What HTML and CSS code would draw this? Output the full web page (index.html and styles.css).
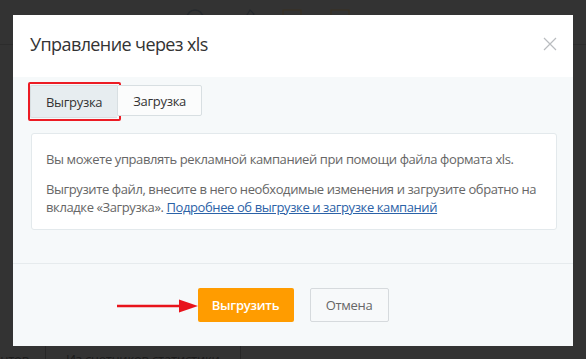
FILE: index.html
```html
<!DOCTYPE html>
<html lang="ru">
<head>
<meta charset="UTF-8">
<meta name="viewport" content="width=device-width, initial-scale=1.0">
<title>Управление через xls</title>
<link rel="stylesheet" href="styles.css">
</head>
<body>
  <div class="page">
    <div class="toolbar">
      <svg class="tool-icons" width="586" height="44" viewBox="0 0 586 44">
        <circle cx="195" cy="18" r="8" fill="none" stroke="#262a2e" stroke-width="1.5"/>
        <path d="M244 20 L250 10 L254 14 L248 22 Z" fill="none" stroke="#262a2e" stroke-width="1.2"/>
        <rect x="283" y="10" width="18" height="16" fill="none" stroke="#3a3020" stroke-width="1"/>
        <rect x="331" y="10" width="18" height="16" fill="none" stroke="#3a3020" stroke-width="1"/>
      </svg>
    </div>
    <div class="workspace"></div>
    <div class="source-tabs">
      <div class="source-tab first">Клиентов</div>
      <div class="source-tab">Из счетчиков статистики</div>
    </div>
  </div>

  <div class="modal">
    <div class="modal-header">
      <h2 class="modal-title">Управление через xls</h2>
      <svg class="close" width="14" height="14" viewBox="0 0 14 14">
        <path d="M1 1 L13 13 M13 1 L1 13" stroke="#b9bcbf" stroke-width="1.2"/>
      </svg>
    </div>
    <div class="modal-body">
      <div class="tabs">
        <button class="tab active" type="button">Выгрузка<span class="mark"></span></button>
        <button class="tab" type="button">Загрузка</button>
      </div>
      <div class="panel">
        <p>Вы можете управлять рекламной кампанией при помощи файла формата xls.</p>
        <p>Выгрузите файл, внесите в него необходимые изменения и загрузите обратно на вкладке «Загрузка». <a href="#">Подробнее об выгрузке и загрузке кампаний</a></p>
      </div>
    </div>
    <div class="modal-footer">
      <svg class="arrow" width="82" height="16" viewBox="0 0 82 16">
        <path d="M0 8 L66 8" stroke="#e8141b" stroke-width="2.5"/>
        <path d="M62 1.5 L81 8 L62 14.5 Z" fill="#e8141b"/>
      </svg>
      <button class="btn btn-primary" type="button">Выгрузить</button>
      <button class="btn btn-cancel" type="button">Отмена</button>
    </div>
  </div>
</body>
</html>
```

FILE: styles.css
```css
body {
  margin: 0;
  background-color: #333;
  font-family: "Open Sans", "Noto Sans", sans-serif;
  overflow: hidden;
}
.page {
  width: 586px;
  height: 359px;
  display: flex;
  flex-direction: column;
}
.toolbar {
  height: 44px;
  border-bottom: 1px solid #2c2c2c;
}
.tool-icons {
  display: block;
}
.workspace {
  flex: 1;
}
.source-tabs {
  display: flex;
  height: 14px;
  overflow: hidden;
}
.source-tab {
  font-size: 13px;
  line-height: 28px;
  color: #1c1c1c;
  padding: 0 20px;
  letter-spacing: -0.2px;
  border-right: 1px solid #272727;
}
.source-tab.first {
  width: 45px;
  padding: 0;
  text-indent: -30px;
  overflow: hidden;
  white-space: nowrap;
}

.modal {
  position: absolute;
  top: 15px;
  left: 13px;
  width: 560px;
  height: 331px;
  background-color: #f6f9fa;
  display: flex;
  flex-direction: column;
}
.modal-header {
  height: 62px;
  background-color: white;
  display: flex;
  align-items: center;
  justify-content: space-between;
  padding: 0 17px 0 17px;
}
.modal-title {
  margin: 0;
  font-size: 18px;
  font-weight: normal;
  color: #333;
  letter-spacing: -0.6px;
  padding-bottom: 4px;
}
.close {
  margin-right: -1px;
  margin-bottom: 4px;
}
.modal-body {
  padding: 8px 16px 33px 17px;
  border-bottom: 1px solid #e6ebed;
}
.tabs {
  display: flex;
}
.tab {
  position: relative;
  height: 31px;
  padding: 0 15px;
  font-family: inherit;
  font-size: 13px;
  letter-spacing: -0.3px;
  color: #333;
  background-color: #fbfcfc;
  border: 1px solid #d8dfe2;
  border-radius: 2px;
}
.tab.active {
  height: 33px;
  background-color: #e7edf0;
  border-right: none;
  border-radius: 2px 0 0 2px;
  padding-top: 1px;
}
.tab + .tab {
  border-radius: 0 2px 2px 0;
}
.mark {
  position: absolute;
  top: -4px;
  left: -3px;
  right: -4px;
  bottom: -4px;
  border: 2px solid #ec1c24;
  border-radius: 2px;
}
.panel {
  margin-top: 15px;
  margin-left: 1px;
  background-color: white;
  border: 1px solid #e3e9ec;
  border-radius: 3px;
  padding: 16px 14px 13px 14px;
}
.panel p {
  margin: 0;
  font-size: 13px;
  line-height: 18px;
  letter-spacing: -0.4px;
  color: #666;
}
.panel p + p {
  margin-top: 12px;
}
.panel a {
  color: #2b62a7;
}
.modal-footer {
  position: relative;
  display: flex;
  justify-content: center;
  gap: 16px;
  padding-top: 24px;
}
.btn {
  height: 34px;
  font-family: inherit;
  font-size: 13px;
  letter-spacing: -0.3px;
  border-radius: 2px;
}
.btn-primary {
  width: 96px;
  background-color: #ff9c00;
  border: none;
  color: white;
  font-weight: 600;
}
.btn-cancel {
  width: 79px;
  background-color: #f7f9fa;
  border: 1px solid #d6dadd;
  color: #666;
}
.arrow {
  position: absolute;
  left: 104px;
  top: 34px;
}
```
